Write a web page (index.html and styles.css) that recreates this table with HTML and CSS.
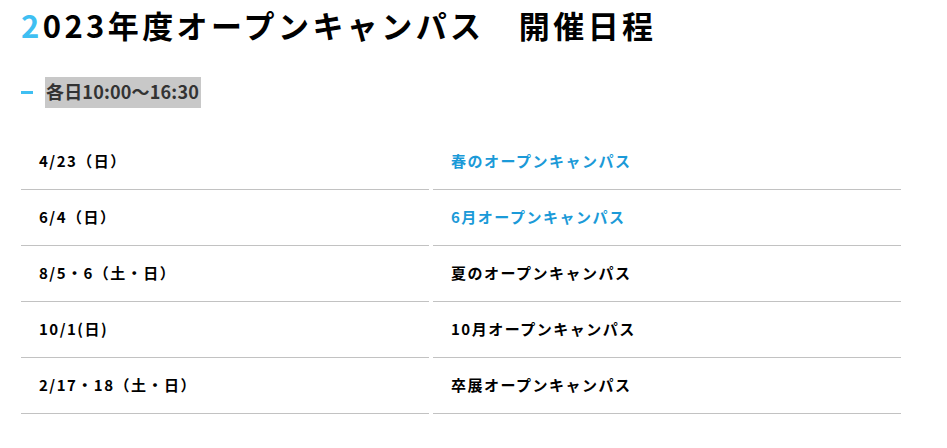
FILE: index.html
```html
<!DOCTYPE html>
<html lang="ja">
<head>
<meta charset="utf-8">
<title>2023年度オープンキャンパス 開催日程</title>
<link rel="stylesheet" href="styles.css">
</head>
<body>
<main class="page">
  <h1 class="title"><span class="accent">2</span>023年度オープンキャンパス　開催日程</h1>
  <div class="sub">
    <span class="dash"></span>
    <span class="hours">各日10:00〜16:30</span>
  </div>
  <div class="schedule">
    <div class="cell date">4/23（日）</div>
    <div class="cell name link">春のオープンキャンパス</div>
    <div class="cell date">6/4（日）</div>
    <div class="cell name link">6月オープンキャンパス</div>
    <div class="cell date">8/5・6（土・日）</div>
    <div class="cell name">夏のオープンキャンパス</div>
    <div class="cell date">10/1(日)</div>
    <div class="cell name">10月オープンキャンパス</div>
    <div class="cell date">2/17・18（土・日）</div>
    <div class="cell name">卒展オープンキャンパス</div>
  </div>
</main>
</body>
</html>
```
FILE: styles.css
```css
html, body {
  margin: 0;
  padding: 0;
  background: #fff;
}
body {
  font-family: "Noto Sans CJK JP", "Noto Sans", sans-serif;
  color: #000;
}
.page {
  padding: 3px 0 0 21px;
  width: 880px;
}
.title {
  margin: 0;
  font-size: 31px;
  line-height: 43px;
  font-weight: 700;
  letter-spacing: 0.11em;
  white-space: nowrap;
}
.accent {
  color: #3fbff2;
}
.sub {
  display: flex;
  align-items: center;
  gap: 12px;
  margin-top: 31px;
}
.dash {
  width: 12px;
  height: 3px;
  background: #3fbff2;
}
.hours {
  display: inline-block;
  background: #c8c8c8;
  color: #333;
  font-size: 18px;
  font-weight: 700;
  line-height: 28px;
  padding: 0 2px 3px 1px;
  letter-spacing: 0.01em;
}
.schedule {
  display: grid;
  grid-template-columns: 408px 1fr;
  column-gap: 4px;
  margin-top: 26px;
}
.cell {
  height: 55px;
  box-sizing: border-box;
  height: 56px;
  display: flex;
  align-items: center;
  padding: 0 0 3px 18px;
  border-bottom: 1px solid #c2c2c2;
  font-size: 15px;
  font-weight: 700;
  letter-spacing: 0.1em;
}
.link {
  color: #1b9ad8;
}
```
